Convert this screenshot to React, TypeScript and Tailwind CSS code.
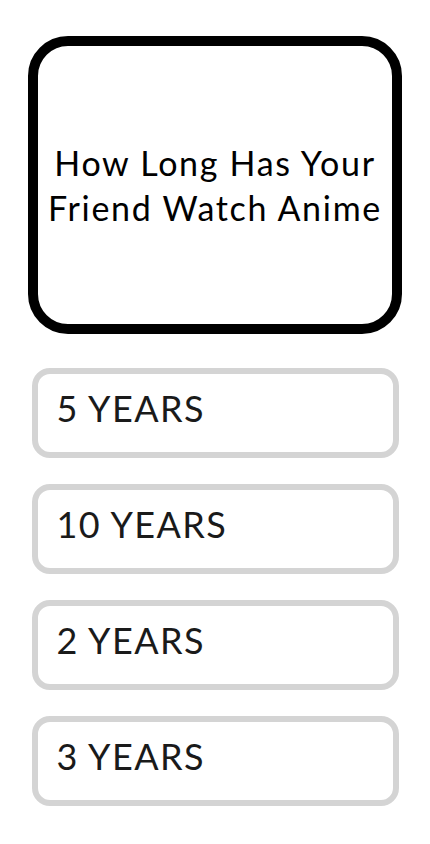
import React from "react";

const answers = ["5 YEARS", "10 YEARS", "2 YEARS", "3 YEARS"];

const App = () => {
  return (
    <div className="min-h-[844px] bg-white pt-[36px] flex flex-col items-center font-['Lato',sans-serif]">
      <div className="w-[374px] h-[298px] border-[10px] border-black rounded-[40px] flex items-center justify-center">
        <h1 className="text-[34px] leading-[45px] tracking-[0.05em] text-black text-center font-normal">
          How Long Has Your
          <br />
          Friend Watch Anime
        </h1>
      </div>
      <div className="mt-[34px] flex flex-col gap-[26px]">
        {answers.map((answer) => (
          <button
            key={answer}
            className="w-[367px] h-[90px] border-[6px] border-[#d4d4d4] rounded-[18px] bg-white flex items-center px-[19px] pb-[10px] text-left"
          >
            <span className="text-[36px] tracking-[0.04em] text-[#1a1a1a]">{answer}</span>
          </button>
        ))}
      </div>
    </div>
  );
};

export default App;
